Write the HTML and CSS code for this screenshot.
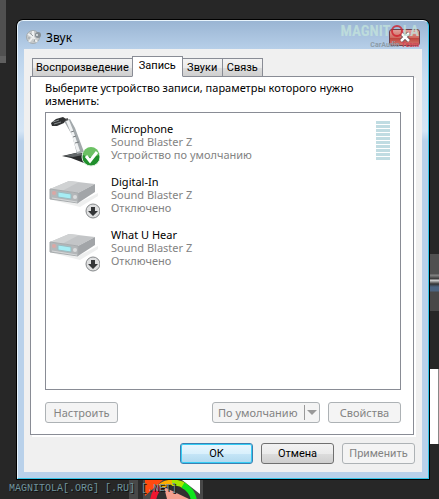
FILE: index.html
```html
<!DOCTYPE html>
<html lang="ru">
  <head>
    <meta charset="UTF-8" />
    <meta name="viewport" content="width=device-width, initial-scale=1.0" />
    <title>Звук</title>
    <link rel="stylesheet" href="styles.css">
  </head>
  <body>
    <div class="desktop">
      <div class="bg-panel bg-left"></div>
      <div class="bg-panel bg-right"></div>
      <div class="bg-page"></div>
      <svg class="bg-wheel" width="74" height="19" viewBox="0 0 74 19">
        <path d="M0 0h74v19H0z" fill="#484848" />
        <path d="M9 0h5v19H9z" fill="#2b2b2b" />
        <path d="M16 0h18L16 16z" fill="#ff4a10" />
        <path d="M53 0h18v14z" fill="#fff" />
        <path d="M24 19a20 20 0 0 1 40 0z" fill="#303030" />
        <path d="M24 21Q25 10 34 5" fill="none" stroke="#f01830" stroke-width="6" />
        <path d="M31 7Q37 2 45 3" fill="none" stroke="#ffae00" stroke-width="6" />
        <path d="M43 3Q51 2 57 7" fill="none" stroke="#a8e800" stroke-width="6" />
        <path d="M54 5Q64 11 65 21" fill="none" stroke="#0fe51c" stroke-width="6" />
        <path d="M35 7L60 19H38z" fill="#f5a090" />
      </svg>

      <div class="dialog" role="dialog" aria-labelledby="dialog-title">
        <div class="titlebar">
          <svg width="16" height="16" viewBox="0 0 16 16">
            <circle cx="7" cy="8" r="6.5" fill="#c9cccd" stroke="#a2abb0" />
            <path d="M7 8L2 5M7 8L3 13M7 8V2M7 8l4 5" stroke="#eef0f0" stroke-width="2" />
            <path d="M4 4l3 3M9 10l-1 3M4 9H2" stroke="#9aa1a5" />
            <circle cx="12" cy="6" r="3" fill="#858e94" />
            <circle cx="11" cy="6" r="1" fill="#e8ecee" />
          </svg>
          <h1 id="dialog-title">Звук</h1>
          <button class="close-button" aria-label="Закрыть">
            <svg width="12" height="10" viewBox="0 0 12 10">
              <path d="M2 1l8 8M10 1L2 9" stroke="#5a4a50" stroke-width="4" />
              <path d="M2 1l8 8M10 1L2 9" stroke="#fff" stroke-width="2.5" />
            </svg>
          </button>
        </div>

        <div class="client">
          <div class="tabs" role="tablist">
            <button class="tab tab-wide" role="tab">Воспроизведение</button>
            <button class="tab tab-active" role="tab" aria-selected="true">Запись</button>
            <button class="tab" role="tab">Звуки</button>
            <button class="tab" role="tab">Связь</button>
          </div>

          <div class="tab-panel" role="tabpanel">
            <p class="hint">Выберите устройство записи, параметры которого нужно изменить:</p>

            <ul class="device-list">
              <li class="device">
                <svg class="device-icon" width="52" height="52" viewBox="0 0 52 52">
                  <path d="M14 41l18-4 9 6v4l-5 1-13-5z" fill="#292b2c" />
                  <path d="M16 41l16-4 3 3-10 2z" fill="#63686a" />
                  <path d="M16 6l6-2 5 9 9 24-7 2-5-19z" fill="#a3a9ac" />
                  <path d="M18 6l3-1 4 10 7 21-3 1-6-19z" fill="#f0f2f3" />
                  <path d="M23 17l3-1M25 22l3-1M27 28l4-1" stroke="#797e81" />
                  <path d="M12 7l8-3" stroke="#555" stroke-width="2" />
                  <path d="M3 8l5-4 7-2 3 2-2 4-7 3-5 0z" fill="#303233" />
                  <path d="M5 7l6-2M6 9l7-2" stroke="#868b8d" />
                  <circle cx="43" cy="42" r="9" fill="#208f2c" stroke="#d8eedb" />
                  <path d="M35 40a8 8 0 0 1 16 0q-8 4-16 0z" fill="#6cc164" />
                  <path d="M38 41l4 5 7-9" fill="none" stroke="#fff" stroke-width="3" />
                </svg>
                <div class="device-text">
                  <strong>Microphone</strong>
                  <span>Sound Blaster Z</span>
                  <span>Устройство по умолчанию</span>
                </div>
                <div class="level" aria-label="Уровень">
                  <i></i><i></i><i></i><i></i><i></i><i></i><i></i><i></i><i></i><i></i>
                </div>
              </li>
              <li class="device">
                <svg class="device-icon" width="52" height="52" viewBox="0 0 52 52">
                  <use href="#receiver" />
                </svg>
                <div class="device-text">
                  <strong>Digital-In</strong>
                  <span>Sound Blaster Z</span>
                  <span>Отключено</span>
                </div>
              </li>
              <li class="device">
                <svg class="device-icon" width="52" height="52" viewBox="0 0 52 52">
                  <g id="receiver" transform="translate(1 5)">
                    <path d="M3 27l26 3 20-10v3L31 34z" fill="#eeefef" />
                    <path d="M1 16L20 8l26 3-17 9z" fill="#c3c5c7" />
                    <path d="M1 16L20 8l10 1-17 9z" fill="#d0d2d3" />
                    <path d="M29 20l17-9v8L29 30z" fill="#a2a5a8" />
                    <path d="M1 16l28 4v10L1 26z" fill="#b4b7b9" stroke="#a8acae" />
                    <path d="M9 19l13 2v5L9 24z" fill="#a6edf4" stroke="#9bbbc0" />
                    <circle cx="5" cy="20" r="2" fill="#dba7a4" />
                    <circle cx="26" cy="24" r="2" fill="#dadcdd" />
                    <path d="M3 25l25 4" stroke="#d5d8d9" />
                    <circle cx="44" cy="38" r="7" fill="#dfe0e1" stroke="#85888a" />
                    <path d="M42 34h4v4h3l-5 5-5-5h3z" fill="#343638" />
                  </g>
                </svg>
                <div class="device-text">
                  <strong>What U Hear</strong>
                  <span>Sound Blaster Z</span>
                  <span>Отключено</span>
                </div>
              </li>
            </ul>

            <div class="panel-actions">
              <button class="btn" disabled>Настроить</button>
              <button class="btn btn-split" disabled>По умолчанию<span class="arrow"></span></button>
              <button class="btn" disabled>Свойства</button>
            </div>
          </div>

          <div class="dialog-actions">
            <button class="btn btn-default">ОК</button>
            <button class="btn">Отмена</button>
            <button class="btn" disabled>Применить</button>
          </div>
        </div>
      </div>

      <div class="logo">MAGNIT<span class="logo-ring"></span>LA</div>
      <div class="logo-sub">CarAudio <b>Team</b></div>
      <div class="site-mark">MAGNITOLA[.ORG] [.RU] [.NET]</div>
    </div>
  </body>
</html>
```
FILE: styles.css
```css
:root {
  --frame: #b9d1ea;
  --face: #f0f0f0;
  --line: #898c95;
  --muted: #838383;
}
* {
  box-sizing: border-box;
}
body {
  margin: 0;
  font-family: "Noto Sans", sans-serif;
  font-size: 11px;
  line-height: 13px;
  color: #000;
}
.desktop {
  position: relative;
  display: flex;
  min-height: 100vh;
  padding: 20px 10px 20px 17px;
  background: #272727;
  overflow: hidden;
}
.bg-panel {
  position: absolute;
  background: #505050;
}
.bg-left {
  top: 0;
  left: 0;
  width: 6px;
  height: 63px;
  border-bottom: 7px solid #606060;
}
.bg-right {
  top: 254px;
  right: 0;
  width: 9px;
  height: 57px;
  background: linear-gradient(#505050 20px, #888 21px, #333 25px, #ddd 26px, #333 30px, #4c6480 33px, #4c6480 37px, #484848 38px);
}
.bg-page {
  position: absolute;
  top: 369px;
  right: 0;
  width: 9px;
  height: 75px;
  background: #fff;
  border-right: 1px solid #888;
}
.bg-wheel {
  position: absolute;
  left: 129px;
  bottom: 0;
}
.dialog {
  position: relative;
  flex: 1;
  display: flex;
  flex-direction: column;
  padding: 0 6px 6px;
  background: linear-gradient(#9ab5d3, var(--frame) 30px, #c9def2 60px, #d5e5f5 110px, var(--frame) 120px);
  border: 1px solid #35c5e8;
  border-left-color: #e8f4fc;
  border-top-color: #e8f4fc;
  border-radius: 6px 6px 0 0;
  box-shadow: 0 0 0 1px #000;
}
.titlebar {
  display: flex;
  align-items: center;
  gap: 4px;
  height: 28px;
  padding: 4px 2px 0;
}
.titlebar h1 {
  flex: 1;
  margin: 0;
  font-size: 12px;
  font-weight: 400;
}
.close-button {
  display: flex;
  align-items: center;
  justify-content: center;
  width: 31px;
  height: 17px;
  padding: 0;
  background: linear-gradient(#e0a09a, #cf6b62 50%, #bd4038 51%, #d27770);
  border: 1px solid #6e4048;
  border-radius: 3px;
}
.client {
  flex: 1;
  display: flex;
  flex-direction: column;
  padding: 7px 7px 8px 6px;
  background: var(--face);
}
.tabs {
  display: flex;
  align-items: flex-end;
  height: 21px;
  padding-left: 2px;
}
.tab {
  min-width: 41px;
  height: 19px;
  margin-left: -1px;
  padding: 0 3px;
  font: inherit;
  font-family: Roboto, sans-serif;
  background: linear-gradient(#f3f3f3, #ebebeb 50%, #dddddd 51%, #cfcfcf);
  border: 1px solid var(--line);
}
.tab-wide {
  min-width: 100px;
  margin-left: 0;
}
.tab-active {
  position: relative;
  z-index: 1;
  min-width: 51px;
  height: 21px;
  padding: 0 6px 2px;
  background: #fff;
  border-bottom-color: #fff;
}
.tab-panel {
  flex: 1;
  display: flex;
  flex-direction: column;
  margin: -1px 1px 0 0;
  padding: 4px 12px 11px 14px;
  background: #fff;
  border: 1px solid var(--line);
  box-shadow: 2px 2px #fff;
}
.hint {
  margin: 0 0 5px;
}
.device-list {
  flex: 1;
  margin: 0;
  padding: 2px 0;
  list-style: none;
  border: 1px solid var(--line);
}
.device {
  display: flex;
  height: 53px;
  padding: 0 10px 0 2px;
}
.device-icon {
  flex: none;
}
.device-text {
  flex: 1;
  display: flex;
  flex-direction: column;
  padding: 7px 0 0 11px;
  color: var(--muted);
}
.device-text strong {
  font-weight: 400;
  color: #000;
}
.level {
  display: flex;
  flex-direction: column;
  gap: 1px;
  width: 14px;
  padding-top: 6px;
}
.level i {
  height: 3px;
  background: #c0dce2;
}
.panel-actions,
.dialog-actions {
  display: flex;
  justify-content: flex-end;
  gap: 8px;
}
.panel-actions {
  margin-top: 12px;
}
.panel-actions .btn:first-child {
  margin-right: auto;
}
.dialog-actions {
  margin-top: 8px;
}
.btn {
  min-width: 73px;
  height: 21px;
  padding: 0 5px;
  font: inherit;
  color: #000;
  background: linear-gradient(#f2f2f2, #ebebeb 50%, #dddddd 51%, #cfcfcf);
  border: 1px solid #707070;
  border-radius: 3px;
}
.dialog-actions .btn {
  font-family: Roboto, sans-serif;
}
.btn:disabled {
  color: var(--muted);
  background: #f4f4f4;
  border-color: #adb2b5;
}
.btn-default {
  background: linear-gradient(#eaf6fd, #d9f0fc 50%, #c5e5f7 51%, #b0d8ee);
  border-color: #3c7fb1;
  box-shadow: inset 0 0 0 1px #35cdf5;
}
.btn-split {
  display: flex;
  align-items: center;
  justify-content: space-between;
  min-width: 108px;
  padding: 0 2px 0 5px;
}
.arrow {
  display: flex;
  align-items: center;
  height: 15px;
  padding-left: 2px;
  border-left: 1px solid #999;
}
.arrow::after {
  content: "";
  border: 5px solid transparent;
  border-top-color: #999;
  border-bottom: 0;
}
.logo {
  position: absolute;
  top: 21px;
  right: 20px;
  display: flex;
  align-items: center;
  font-family: "Roboto Condensed", Roboto, sans-serif;
  font-size: 15px;
  font-weight: 700;
  line-height: 20px;
  color: #c3e3dc;
  opacity: 0.8;
}
.logo-ring {
  width: 12px;
  height: 12px;
  border: 2px solid #d0202c;
  border-radius: 50%;
}
.logo-sub {
  position: absolute;
  top: 41px;
  right: 20px;
  font-family: Roboto, sans-serif;
  font-size: 7px;
  font-weight: 700;
  line-height: 8px;
  color: #8c9ba8;
}
.logo-sub b {
  color: #d04a58;
}
.site-mark {
  position: absolute;
  left: 9px;
  bottom: 4px;
  font-family: "Liberation Mono", monospace;
  font-size: 10px;
  line-height: 12px;
  color: #6f949e;
  text-shadow: 1px 1px #111;
}
```
